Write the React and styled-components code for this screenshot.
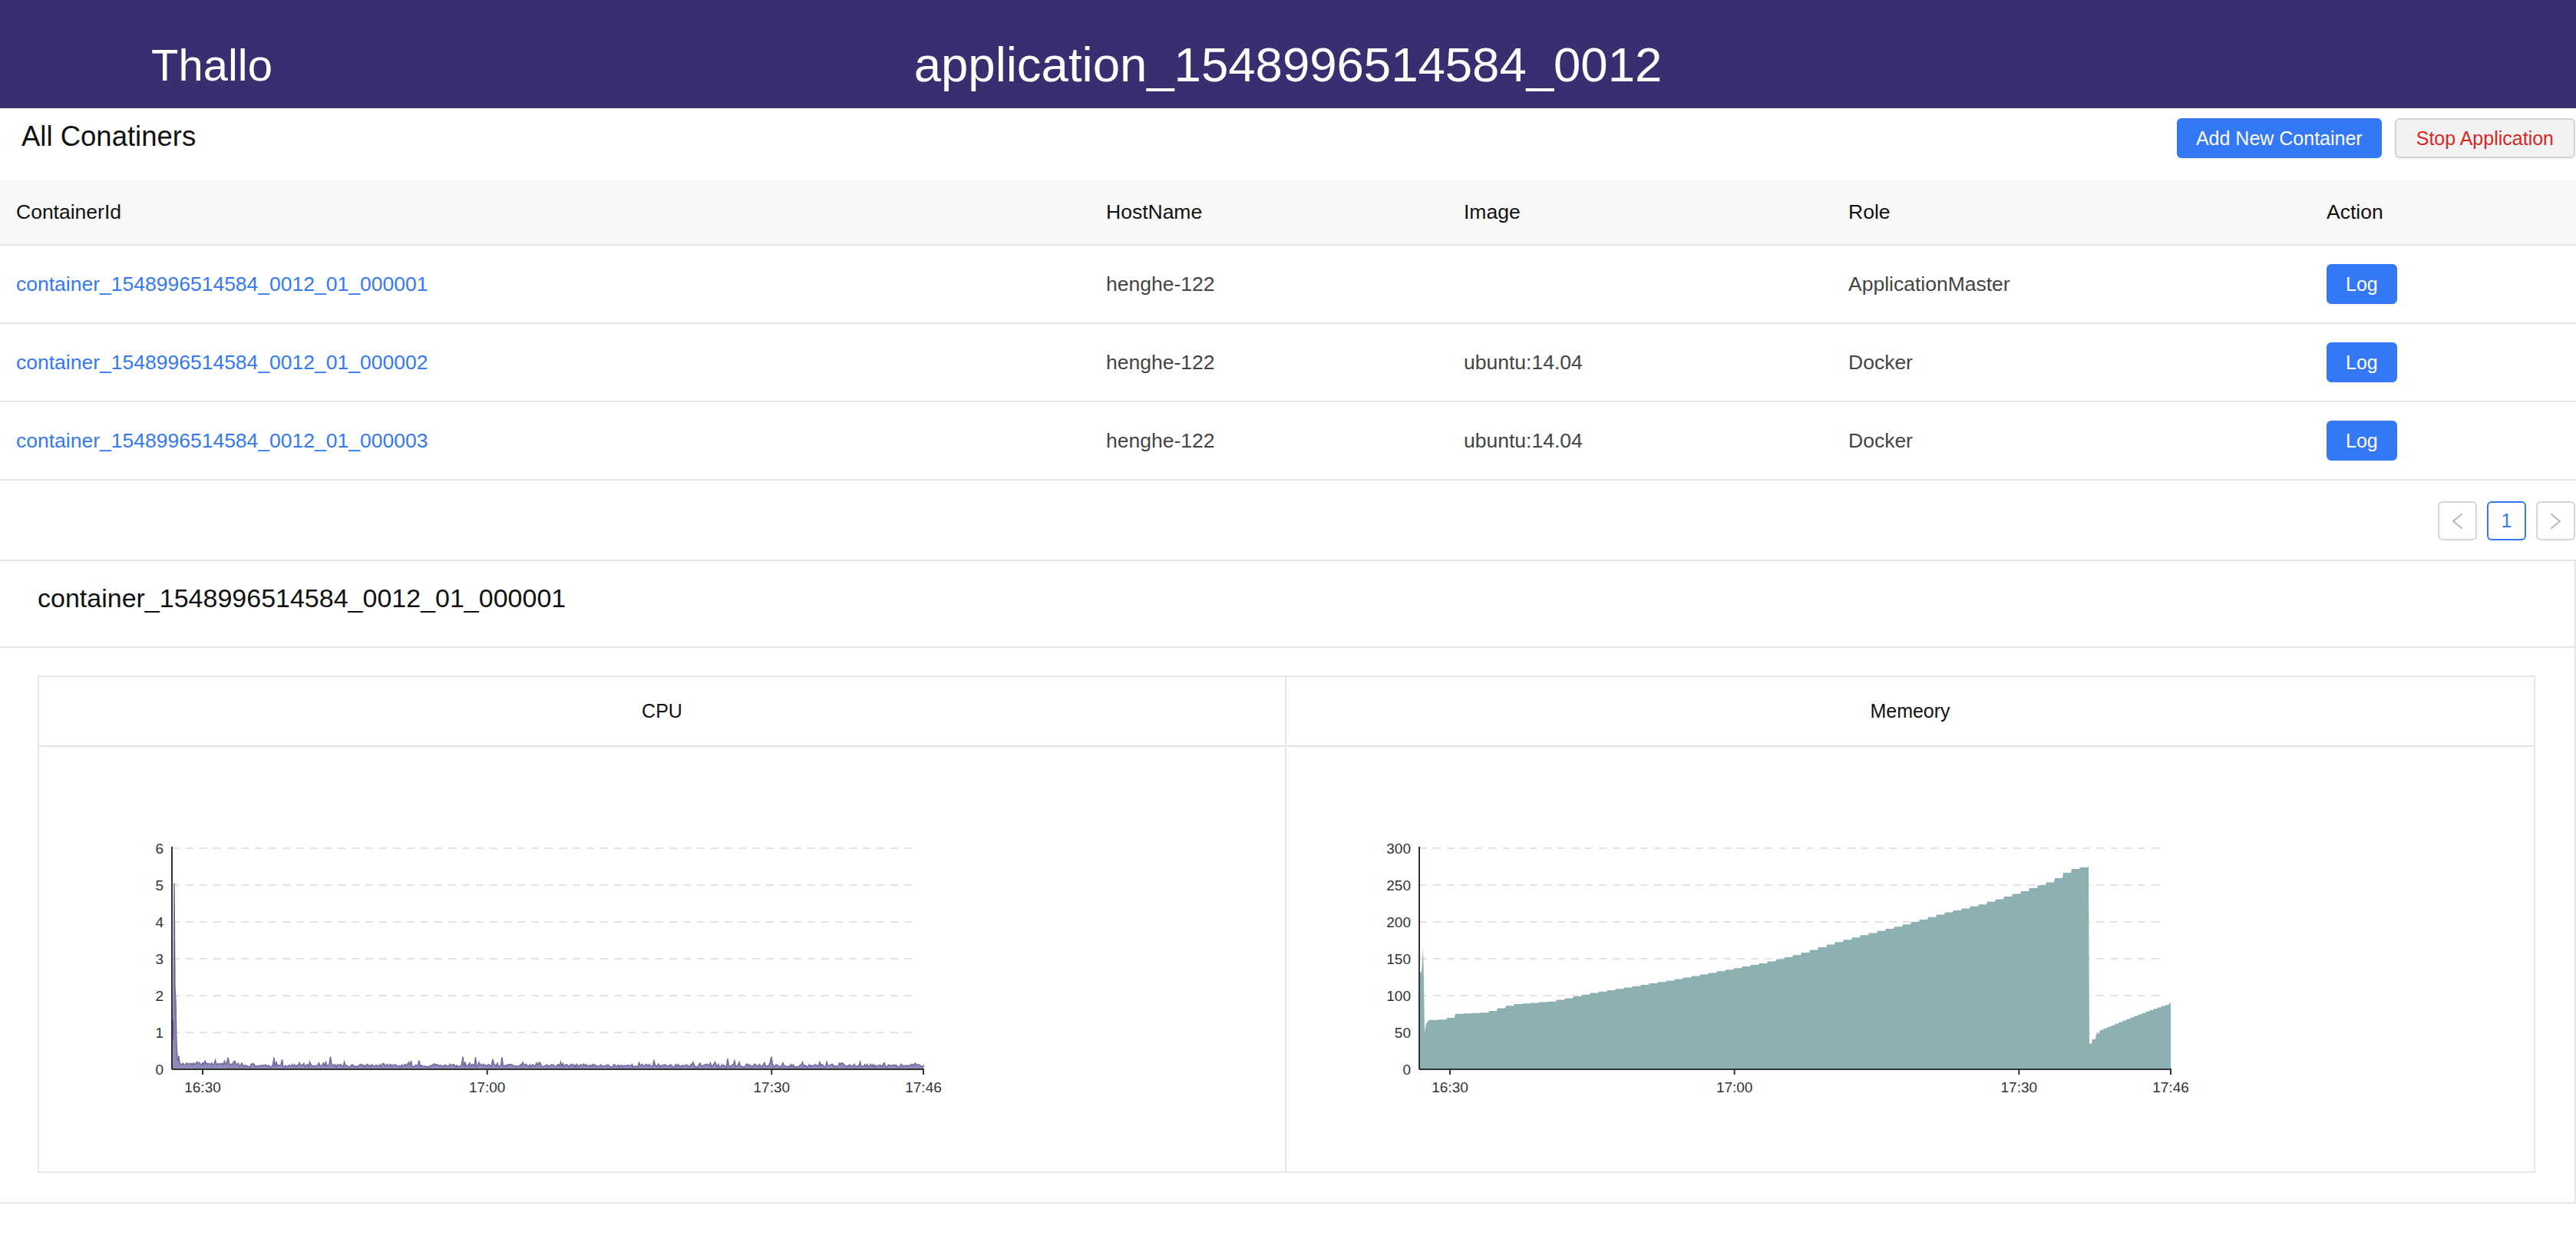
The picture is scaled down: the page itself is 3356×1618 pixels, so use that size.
import React from 'react';
import styled, { createGlobalStyle } from 'styled-components';

const GlobalStyle = createGlobalStyle`
  html, body { margin: 0; padding: 0; background: #fff; }
  body { font-family: "Liberation Sans", Arial, Helvetica, sans-serif; color: #1f1f1f; }
  * { box-sizing: border-box; }
`;

const FONT = '"Liberation Sans", Arial, Helvetica, sans-serif';
const BLUE = '#3478f6';
const LINE = '#e6e6e6';

const Page = styled.div`
  width: 3356px;
  min-height: 1618px;
  background: #fff;
`;

const TopBar = styled.header`
  height: 141px;
  background: #392e6f;
  color: #fff;
  display: grid;
  grid-template-columns: 1fr auto 1fr;
  align-items: center;
  padding-top: 28px;
`;

const Brand = styled.div`
  padding-left: 197px;
  font-size: 58px;
  line-height: 1;
`;

const AppTitle = styled.h1`
  margin: 0;
  font-size: 63.5px;
  font-weight: 400;
  line-height: 1;
`;

const Toolbar = styled.div`
  height: 93px;
  display: flex;
  justify-content: space-between;
  align-items: flex-start;
  padding: 13px 1px 0 28px;
`;

const SectionTitle = styled.h2`
  margin: 0;
  font-size: 36.5px;
  font-weight: 400;
  line-height: 48px;
  color: #111;
`;

const ButtonGroup = styled.div`
  display: flex;
  gap: 17px;
`;

const Button = styled.button`
  height: 52px;
  padding: 0 ${p => p.$pad || 24}px;
  font: 25px ${FONT};
  border-radius: 6px;
  cursor: pointer;
  border: 2px solid ${p => (p.$danger ? '#d4d4d4' : BLUE)};
  background: ${p => (p.$danger ? '#f2f2f2' : BLUE)};
  color: ${p => (p.$danger ? '#d8261f' : '#fff')};
  box-shadow: 0 2px 0 rgba(0, 0, 0, 0.03);
`;

const Table = styled.div`
  width: 100%;
`;

const Row = styled.div`
  display: grid;
  grid-template-columns: 1420px 466px 501px 623px 1fr;
  align-items: center;
  height: ${p => (p.$head ? '86px' : '102px')};
  background: ${p => (p.$head ? '#f8f8f8' : '#fff')};
  border-bottom: 2px solid ${LINE};
`;

const Cell = styled.div`
  padding-left: 21px;
  font-size: 26.5px;
  color: ${p => (p.$head ? '#111' : '#444')};
  white-space: nowrap;
`;

const Link = styled.a`
  color: ${BLUE};
  text-decoration: none;
  cursor: pointer;
`;

const Pager = styled.div`
  display: flex;
  justify-content: flex-end;
  gap: 13px;
  padding: 27px 1px 25px 0;
`;

const PageItem = styled.button`
  width: 51px;
  height: 51px;
  padding: 0;
  border-radius: 6px;
  background: #fff;
  border: 2px solid ${p => (p.$active ? BLUE : '#d6d6d6')};
  color: ${p => (p.$active ? BLUE : '#b5b5b5')};
  font: 25px ${FONT};
  display: flex;
  align-items: center;
  justify-content: center;
`;

const Panel = styled.section`
  border: 2px solid ${LINE};
  border-left: none;
`;

const PanelHeader = styled.div`
  height: 113px;
  border-bottom: 2px solid ${LINE};
  display: flex;
  align-items: center;
  padding: 0 0 14px 49px;
  font-size: 34px;
  color: #111;
`;

const PanelBody = styled.div`
  padding: 36px 51px 38px 49px;
`;

const CardGrid = styled.div`
  display: grid;
  grid-template-columns: 1fr 1fr;
`;

const Card = styled.div`
  height: 648px;
  border: 2px solid ${LINE};
  border-left-width: ${p => (p.$joined ? '0' : '2px')};
  display: flex;
  flex-direction: column;
`;

const CardHeader = styled.div`
  height: 91px;
  border-bottom: 2px solid ${LINE};
  display: flex;
  align-items: center;
  justify-content: center;
  font-size: 25px;
  color: #111;
`;

const CardBody = styled.div`
  flex: 1;
  position: relative;
`;

const ChartSvg = styled.svg`
  display: block;
  width: 100%;
  height: 553px;
  font-family: ${FONT};
`;

/* ---------- chart geometry ---------- */
const AX = 173;
const TOP = 132;
const BOT = 420;
const RIGHT = 1152;
const GRID_END = 1144;
const T0 = 213;
const PX_PER_MIN = (RIGHT - T0) / 76;
const ticks = [
  { label: '16:30', x: T0 },
  { label: '17:00', x: T0 + 30 * PX_PER_MIN },
  { label: '17:30', x: T0 + 60 * PX_PER_MIN },
  { label: '17:46', x: RIGHT },
];

function makeRand(seed) {
  let s = seed >>> 0;
  return () => {
    s = (Math.imul(s, 1664525) + 1013904223) >>> 0;
    return s / 4294967296;
  };
}

const cpuPoints = (() => {
  const r = makeRand(11);
  const pts = [
    [173, 1.3], [174, 1.3], [175, 0.8], [176, 5.05], [177, 2.2], [178, 1.85],
    [179, 0.7], [180, 0.3], [181, 0.22], [182, 0.36], [183, 0.18],
  ];
  for (let x = 184.5; x <= RIGHT; x += 1.5) {
    let v = 0.06 + r() * 0.08;
    const q = r();
    if (q > 0.972) v = 0.17 + r() * 0.18;
    else if (q > 0.9) v += 0.06;
    if (x < 260) v += 0.05;
    pts.push([x, v]);
  }
  pts.push([RIGHT, 0.05]);
  return pts;
})();

const memKeys = [
  [186, 67], [207, 68], [211, 75], [256, 77], [291, 88], [341, 92], [397, 104],
  [446, 112], [509, 123], [565, 134], [621, 145], [663, 156], [705, 170],
  [747, 182], [797, 195], [853, 212], [902, 224], [951, 240], [993, 255],
  [1018, 271], [1044, 276],
];

function interp(keys, x) {
  for (let i = 0; i < keys.length - 1; i++) {
    const [x0, y0] = keys[i];
    const [x1, y1] = keys[i + 1];
    if (x >= x0 && x <= x1) return y0 + ((y1 - y0) * (x - x0)) / (x1 - x0);
  }
  return keys[keys.length - 1][1];
}

const memPoints = (() => {
  const pts = [
    [173, 130], [176, 132], [178, 165], [179, 120], [180, 50], [182, 62], [186, 67],
  ];
  let prev = 67;
  for (let x = 186 + 11; x <= 1044; x += 11) {
    const v = interp(memKeys, x);
    pts.push([x, prev]);
    pts.push([x + 1, v]);
    prev = v;
  }
  pts.push([1044, 276]);
  pts.push([1045, 276]);
  pts.push([1046, 35]);
  const rec = [[1046, 35], [1052, 46], [1058, 53], [1070, 58], [1084, 64], [1098, 70], [1118, 78], [1137, 85], [1152, 90]];
  let p2 = 35;
  for (let x = 1049; x <= RIGHT; x += 5) {
    const v = interp(rec, x);
    pts.push([x, p2]);
    pts.push([x + 1, v]);
    p2 = v;
  }
  pts.push([RIGHT, 90]);
  return pts;
})();

function Chart({ points, max, step, fill, stroke }) {
  const scale = (BOT - TOP) / max;
  const y = v => BOT - v * scale;
  const line = points.map(([x, v], i) => `${i ? 'L' : 'M'}${x.toFixed(1)} ${y(v).toFixed(1)}`).join(' ');
  const area = `M${AX} ${BOT} ${line.replace(/^M/, 'L')} L${RIGHT} ${BOT} Z`;
  const levels = [];
  for (let v = 0; v <= max; v += step) levels.push(v);
  return (
    <ChartSvg viewBox="0 0 1623 553" preserveAspectRatio="xMinYMin meet">
      {levels.filter(v => v > 0).map(v => (
        <line key={v} x1={AX} x2={GRID_END} y1={y(v)} y2={y(v)} stroke="#e3e3e3" strokeWidth="2" strokeDasharray="10 8" />
      ))}
      <path d={area} fill={fill} />
      {stroke && <path d={line} fill="none" stroke={stroke} strokeWidth="1.4" />}
      <line x1={AX} x2={AX} y1={TOP - 2} y2={BOT} stroke="#333" strokeWidth="2" />
      <line x1={AX} x2={RIGHT + 1} y1={BOT} y2={BOT} stroke="#333" strokeWidth="2" />
      {levels.map(v => (
        <text key={v} x={162} y={y(v)} textAnchor="end" dominantBaseline="central" fontSize="19" fill="#333">
          {v}
        </text>
      ))}
      {ticks.map(t => (
        <g key={t.label}>
          <line x1={t.x} x2={t.x} y1={BOT} y2={BOT + 7} stroke="#333" strokeWidth="2" />
          <text x={t.x} y={443} textAnchor="middle" dominantBaseline="central" fontSize="19" fill="#333">
            {t.label}
          </text>
        </g>
      ))}
    </ChartSvg>
  );
}

const Chevron = ({ dir }) => (
  <svg width="15" height="20" viewBox="0 0 15 20" fill="none">
    <polyline
      points={dir === 'left' ? '13,1 2,10 13,19' : '2,1 13,10 2,19'}
      stroke="#b8b8b8"
      strokeWidth="2"
      strokeLinecap="round"
      strokeLinejoin="round"
    />
  </svg>
);

const rows = [
  { id: 'container_1548996514584_0012_01_000001', host: 'henghe-122', image: '', role: 'ApplicationMaster' },
  { id: 'container_1548996514584_0012_01_000002', host: 'henghe-122', image: 'ubuntu:14.04', role: 'Docker' },
  { id: 'container_1548996514584_0012_01_000003', host: 'henghe-122', image: 'ubuntu:14.04', role: 'Docker' },
];

export default function App() {
  return (
    <Page>
      <GlobalStyle />
      <TopBar>
        <Brand>Thallo</Brand>
        <AppTitle>application_1548996514584_0012</AppTitle>
        <div />
      </TopBar>

      <Toolbar>
        <SectionTitle>All Conatiners</SectionTitle>
        <ButtonGroup>
          <Button $pad={23}>Add New Container</Button>
          <Button $danger $pad={26}>Stop Application</Button>
        </ButtonGroup>
      </Toolbar>

      <Table>
        <Row $head>
          <Cell $head>ContainerId</Cell>
          <Cell $head>HostName</Cell>
          <Cell $head>Image</Cell>
          <Cell $head>Role</Cell>
          <Cell $head>Action</Cell>
        </Row>
        {rows.map(r => (
          <Row key={r.id}>
            <Cell><Link>{r.id}</Link></Cell>
            <Cell>{r.host}</Cell>
            <Cell>{r.image}</Cell>
            <Cell>{r.role}</Cell>
            <Cell><Button $pad={23}>Log</Button></Cell>
          </Row>
        ))}
      </Table>

      <Pager>
        <PageItem aria-label="previous"><Chevron dir="left" /></PageItem>
        <PageItem $active>1</PageItem>
        <PageItem aria-label="next"><Chevron dir="right" /></PageItem>
      </Pager>

      <Panel>
        <PanelHeader>container_1548996514584_0012_01_000001</PanelHeader>
        <PanelBody>
          <CardGrid>
            <Card>
              <CardHeader>CPU</CardHeader>
              <CardBody>
                <Chart points={cpuPoints} max={6} step={1} fill="#8f8aba" stroke="#6c679f" />
              </CardBody>
            </Card>
            <Card $joined>
              <CardHeader>Memeory</CardHeader>
              <CardBody>
                <Chart points={memPoints} max={300} step={50} fill="#8db0b2" />
              </CardBody>
            </Card>
          </CardGrid>
        </PanelBody>
      </Panel>
    </Page>
  );
}
